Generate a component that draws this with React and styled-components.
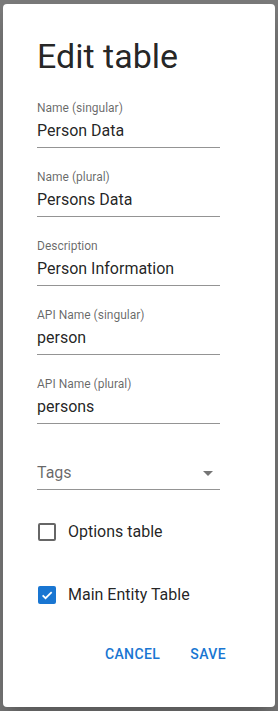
import React from 'react';
import styled, { createGlobalStyle } from 'styled-components';

const GlobalStyle = createGlobalStyle`
  html, body {
    margin: 0;
    padding: 0;
  }
  body {
    font-family: Roboto, "Liberation Sans", sans-serif;
    background: #7a7a7a;
  }
`;

const fields = [
  { label: 'Name (singular)', value: 'Person Data' },
  { label: 'Name (plural)', value: 'Persons Data' },
  { label: 'Description', value: 'Person Information' },
  { label: 'API Name (singular)', value: 'person' },
  { label: 'API Name (plural)', value: 'persons' },
];

const App = () => {
  return (
    <Backdrop>
      <GlobalStyle />
      <Dialog>
        <Title>Edit table</Title>
        {fields.map((f) => (
          <Field key={f.label}>
            <Label>{f.label}</Label>
            <Input>{f.value}</Input>
          </Field>
        ))}
        <SelectField>
          <Input $placeholder>
            Tags
            <svg width="10" height="5" viewBox="0 0 10 5">
              <path d="M0 0l5 5 5-5z" fill="rgba(0,0,0,0.54)" />
            </svg>
          </Input>
        </SelectField>
        <CheckRow $gap="30px">
          <Box />
          Options table
        </CheckRow>
        <CheckRow $gap="39px">
          <Box $checked>
            <svg width="14" height="14" viewBox="0 0 24 24">
              <path
                d="M4.5 12.5l5 5L20 7"
                fill="none"
                stroke="#fff"
                strokeWidth="3"
              />
            </svg>
          </Box>
          Main Entity Table
        </CheckRow>
        <Actions>
          <TextButton>Cancel</TextButton>
          <TextButton>Save</TextButton>
        </Actions>
      </Dialog>
    </Backdrop>
  );
};

const Backdrop = styled.div`
  height: 711px;
  box-sizing: border-box;
  padding: 4px 3px 4px 3px;
  background: #7a7a7a;
`;

const Dialog = styled.div`
  height: 703px;
  box-sizing: border-box;
  background: #fff;
  border-radius: 4px;
  padding: 31px 55px 0 34px;
  display: flex;
  flex-direction: column;
  box-shadow: 0 11px 15px -7px rgba(0, 0, 0, 0.2),
    0 24px 38px 3px rgba(0, 0, 0, 0.14);
`;

const Title = styled.h2`
  margin: 0 0 23px;
  font-size: 34px;
  line-height: 42px;
  font-weight: 400;
  color: rgba(0, 0, 0, 0.87);
`;

const Field = styled.div`
  display: flex;
  flex-direction: column;
  margin-bottom: 21px;
`;

const Label = styled.div`
  font-size: 12px;
  line-height: 16px;
  color: rgba(0, 0, 0, 0.6);
  margin-bottom: 3px;
`;

const Input = styled.div`
  display: flex;
  align-items: center;
  justify-content: space-between;
  font-size: 16px;
  line-height: 24px;
  padding-bottom: 4px;
  border-bottom: 1px solid rgba(0, 0, 0, 0.42);
  color: ${(p) => (p.$placeholder ? 'rgba(0,0,0,0.6)' : 'rgba(0,0,0,0.87)')};
  svg {
    margin-right: 7px;
    margin-top: 1px;
  }
`;

const SelectField = styled.div`
  margin-top: 16px;
`;

const CheckRow = styled.div`
  display: flex;
  align-items: center;
  gap: 12px;
  font-size: 16px;
  line-height: 24px;
  color: rgba(0, 0, 0, 0.87);
  margin-top: ${(p) => p.$gap};
  padding-left: 1px;
`;

const Box = styled.span`
  width: 18px;
  height: 18px;
  box-sizing: border-box;
  border-radius: 2px;
  display: flex;
  align-items: center;
  justify-content: center;
  border: ${(p) => (p.$checked ? 'none' : '2px solid rgba(0,0,0,0.6)')};
  background: ${(p) => (p.$checked ? '#1976d2' : 'transparent')};
`;

const Actions = styled.div`
  display: flex;
  justify-content: flex-end;
  gap: 30px;
  margin-top: 35px;
  margin-right: -6px;
`;

const TextButton = styled.button`
  border: none;
  background: none;
  padding: 0;
  font-family: Roboto, "Liberation Sans", sans-serif;
  font-size: 14px;
  font-weight: 500;
  line-height: 24px;
  letter-spacing: 0.4px;
  text-transform: uppercase;
  color: #1976d2;
`;

export default App;
